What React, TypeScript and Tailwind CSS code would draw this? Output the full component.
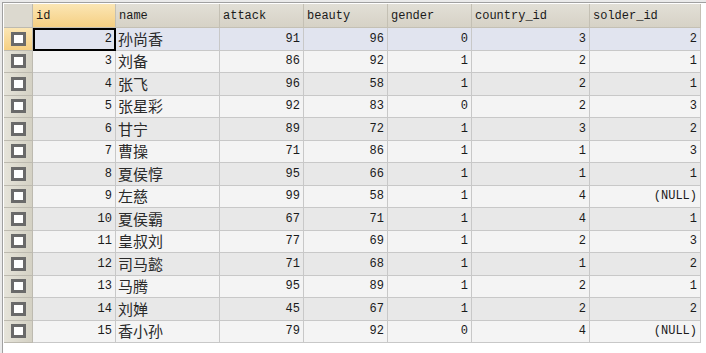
const cols = [
  { key: "id", label: "id", w: "w-[83px]" },
  { key: "name", label: "name", w: "w-[104px]" },
  { key: "attack", label: "attack", w: "w-[84px]" },
  { key: "beauty", label: "beauty", w: "w-[84px]" },
  { key: "gender", label: "gender", w: "w-[84px]" },
  { key: "country_id", label: "country_id", w: "w-[118px]" },
  { key: "solder_id", label: "solder_id", w: "w-[111px]" },
];

const rows = [
  [2, "孙尚香", 91, 96, 0, 3, 2],
  [3, "刘备", 86, 92, 1, 2, 1],
  [4, "张飞", 96, 58, 1, 2, 1],
  [5, "张星彩", 92, 83, 0, 2, 3],
  [6, "甘宁", 89, 72, 1, 3, 2],
  [7, "曹操", 71, 86, 1, 1, 3],
  [8, "夏侯惇", 95, 66, 1, 1, 1],
  [9, "左慈", 99, 58, 1, 4, "(NULL)"],
  [10, "夏侯霸", 67, 71, 1, 4, 1],
  [11, "皇叔刘", 77, 69, 1, 2, 3],
  [12, "司马懿", 71, 68, 1, 1, 2],
  [13, "马腾", 95, 89, 1, 2, 1],
  [14, "刘婵", 45, 67, 1, 2, 2],
  [15, "香小孙", 79, 92, 0, 4, "(NULL)"],
];

const mono = "font-['Liberation_Mono','Noto_Sans_CJK_SC',monospace]";

function Check() {
  return <span className="block w-[15px] h-[14px] border-[3px] border-[#6a6a6a] bg-white" />;
}

export default function App() {
  return (
    <div className="w-[706px] h-[353px] bg-[#eaeaea] pt-[2px] pl-[2px] overflow-hidden">
      <div className={`w-full h-full bg-white border-t border-l border-[#a0a0a0] pt-[1px] pl-[1px] text-[12px] text-[#1a1a1a] ${mono}`}>
        {/* header */}
        <div className="flex h-[24px]">
          <div className="w-[29px] shrink-0 bg-[#dcd9cf] border-r border-b border-[#bdbab0]" />
          {cols.map((c) => (
            <div
              key={c.key}
              className={`${c.w} shrink-0 flex items-center px-[3px] border-r border-b border-[#c4c0b4] ${
                c.key === "id" ? "bg-gradient-to-b from-[#fbe6b4] to-[#f5cf82]" : "bg-gradient-to-b from-[#e2dfd6] to-[#d6d2c6]"
              }`}
            >
              {c.label}
            </div>
          ))}
        </div>
        {/* rows */}
        {rows.map((r, i) => {
          const bg = i === 0 ? "bg-[#e1e4ef]" : i % 2 === 1 ? "bg-[#f4f4f4]" : "bg-[#e8e8e8]";
          return (
            <div key={i} className="flex h-[22.5px]">
              <div
                className={`w-[29px] shrink-0 flex items-center justify-center border-r border-b border-[#bdbab0] ${
                  i === 0 ? "bg-gradient-to-b from-[#fbe6b4] to-[#f5cf82]" : "bg-gradient-to-r from-[#e6e4da] to-[#d4d1c4]"
                }`}
              >
                <Check />
              </div>
              {cols.map((c, j) => {
                const v = r[j];
                const left = c.key === "name";
                const sel = i === 0 && j === 0;
                return (
                  <div
                    key={c.key}
                    className={`${c.w} shrink-0 flex items-center border-r border-b border-[#c8c8c8] ${bg} ${
                      left ? "justify-start px-[2px] font-['Noto_Sans_CJK_SC',sans-serif] text-[15px] text-[#2a2a2a]" : "justify-end px-[3px]"
                    } ${sel ? "outline-2 -outline-offset-2 outline-black" : ""}`}
                  >
                    {v}
                  </div>
                );
              })}
            </div>
          );
        })}
      </div>
    </div>
  );
}
